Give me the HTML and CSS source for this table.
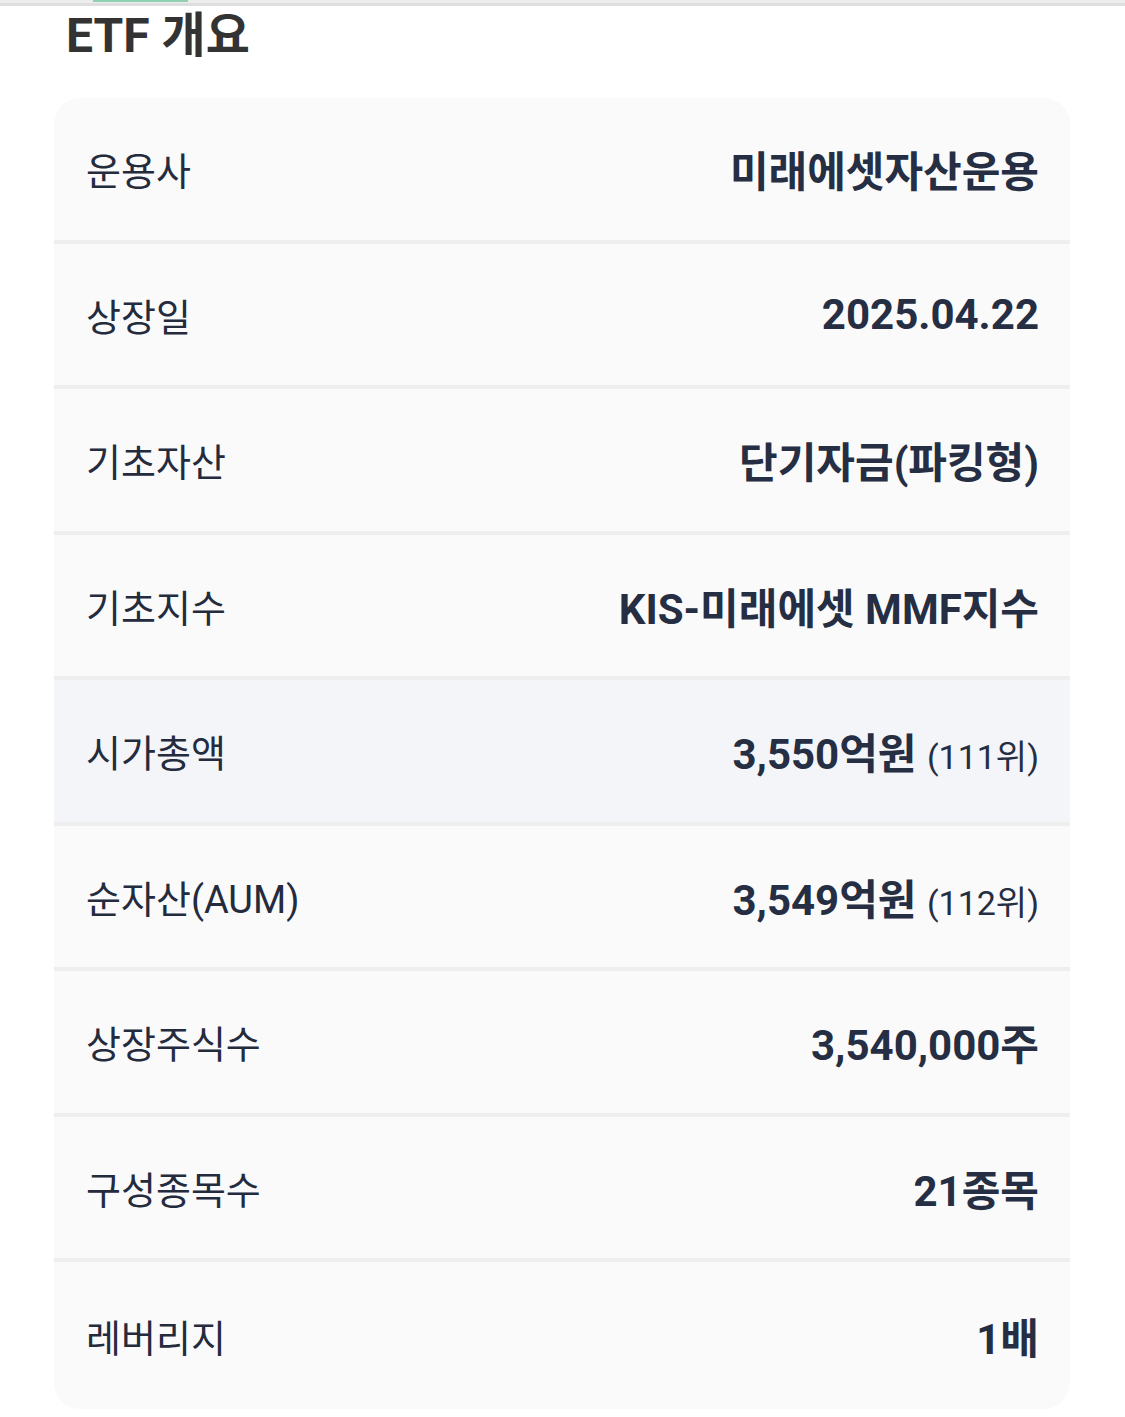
FILE: index.html
```html
<!DOCTYPE html>
<html lang="ko">
<head>
<meta charset="utf-8">
<link rel="stylesheet" href="styles.css">
</head>
<body>
<div class="tabbar"><div class="tab-indicator"></div></div>
<section class="overview">
  <h2 class="title">ETF 개요</h2>
  <div class="card">
    <div class="row"><span class="label">운용사</span><span class="value">미래에셋자산운용</span></div>
    <div class="row"><span class="label">상장일</span><span class="value">2025.04.22</span></div>
    <div class="row"><span class="label">기초자산</span><span class="value">단기자금(파킹형)</span></div>
    <div class="row"><span class="label">기초지수</span><span class="value">KIS-미래에셋 MMF지수</span></div>
    <div class="row row-hl"><span class="label">시가총액</span><span class="value">3,550억원 <span class="rank">(111위)</span></span></div>
    <div class="row"><span class="label">순자산(AUM)</span><span class="value">3,549억원 <span class="rank">(112위)</span></span></div>
    <div class="row"><span class="label">상장주식수</span><span class="value">3,540,000주</span></div>
    <div class="row"><span class="label">구성종목수</span><span class="value">21종목</span></div>
    <div class="row"><span class="label">레버리지</span><span class="value">1배</span></div>
  </div>
</section>
</body>
</html>
```
FILE: styles.css
```css
* { box-sizing: border-box; }
html, body { margin: 0; padding: 0; background: #ffffff; }
body {
  font-family: Roboto, "Noto Sans CJK KR", sans-serif;
  color: #232b3d;
}
.tabbar {
  height: 6px;
  background: #ececec;
  border-bottom: 3px solid #dedede;
  position: relative;
}
.tab-indicator {
  position: absolute;
  left: 93px;
  top: 0;
  width: 95px;
  height: 2px;
  background: #8fd0b0;
}
.overview { padding: 0 55px 0 54px; }
.title {
  margin: 0;
  padding: 2px 0 0 12px;
  font-size: 48px;
  font-weight: 700;
  color: #333333;
  line-height: 56px;
  height: 92px;
}
.card {
  background: #fafafb;
  border-radius: 26px;
  overflow: hidden;
  display: flex;
  flex-direction: column;
}
.row {
  display: flex;
  justify-content: space-between;
  align-items: center;
  height: 145.5px;
  padding: 0 31px 0 32px;
  border-bottom: 4px solid #eeeeee;
}
.row:last-child { border-bottom: none; height: 147px; }
.row-hl { background: #f3f5f9; }
.label {
  font-size: 38px;
  font-weight: 400;
  color: #232b3d;
}
.value {
  font-size: 42px;
  font-weight: 700;
  color: #252e42;
}
.rank {
  font-size: 34px;
  font-weight: 400;
}
```
